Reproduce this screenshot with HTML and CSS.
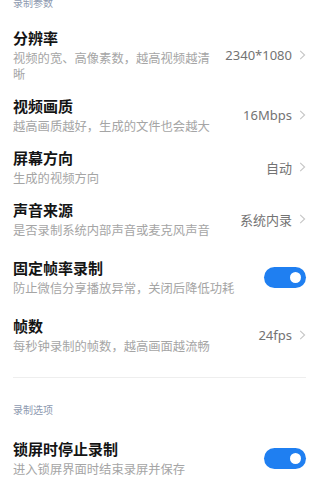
FILE: index.html
```html
<!DOCTYPE html>
<html lang="zh-CN">
<head>
<meta charset="utf-8">
<title>录制设置</title>
<link rel="stylesheet" href="styles.css">
</head>
<body>
<div class="page">
  <section class="group group-first">
    <div class="group-title">录制参数</div>
    <div class="row">
      <div class="text">
        <div class="title">分辨率</div>
        <div class="sub">视频的宽、高像素数，越高视频越清晰</div>
      </div>
      <div class="value">2340*1080</div>
      <svg class="chev" viewBox="0 0 7 10" width="7" height="10"><path d="M1.2 0.8 L5.6 5 L1.2 9.2" fill="none" stroke="#c6c6c6" stroke-width="1.1"/></svg>
    </div>
    <div class="row">
      <div class="text">
        <div class="title">视频画质</div>
        <div class="sub">越高画质越好，生成的文件也会越大</div>
      </div>
      <div class="value">16Mbps</div>
      <svg class="chev" viewBox="0 0 7 10" width="7" height="10"><path d="M1.2 0.8 L5.6 5 L1.2 9.2" fill="none" stroke="#c6c6c6" stroke-width="1.1"/></svg>
    </div>
    <div class="row">
      <div class="text">
        <div class="title">屏幕方向</div>
        <div class="sub">生成的视频方向</div>
      </div>
      <div class="value">自动</div>
      <svg class="chev" viewBox="0 0 7 10" width="7" height="10"><path d="M1.2 0.8 L5.6 5 L1.2 9.2" fill="none" stroke="#c6c6c6" stroke-width="1.1"/></svg>
    </div>
    <div class="row">
      <div class="text">
        <div class="title">声音来源</div>
        <div class="sub">是否录制系统内部声音或麦克风声音</div>
      </div>
      <div class="value">系统内录</div>
      <svg class="chev" viewBox="0 0 7 10" width="7" height="10"><path d="M1.2 0.8 L5.6 5 L1.2 9.2" fill="none" stroke="#c6c6c6" stroke-width="1.1"/></svg>
    </div>
    <div class="row row-switch">
      <div class="text">
        <div class="title">固定帧率录制</div>
        <div class="sub">防止微信分享播放异常，关闭后降低功耗</div>
      </div>
      <div class="switch on"><span class="knob"></span></div>
    </div>
    <div class="row">
      <div class="text">
        <div class="title">帧数</div>
        <div class="sub">每秒钟录制的帧数，越高画面越流畅</div>
      </div>
      <div class="value">24fps</div>
      <svg class="chev" viewBox="0 0 7 10" width="7" height="10"><path d="M1.2 0.8 L5.6 5 L1.2 9.2" fill="none" stroke="#c6c6c6" stroke-width="1.1"/></svg>
    </div>
  </section>
  <div class="divider"></div>
  <section class="group group-second">
    <div class="group-title">录制选项</div>
    <div class="row row-switch">
      <div class="text">
        <div class="title">锁屏时停止录制</div>
        <div class="sub">进入锁屏界面时结束录屏并保存</div>
      </div>
      <div class="switch on"><span class="knob"></span></div>
    </div>
  </section>
</div>
</body>
</html>
```
FILE: styles.css
```css
html, body {
  margin: 0;
  padding: 0;
  background: #ffffff;
}
body {
  font-family: "Noto Sans", "Noto Sans CJK SC", sans-serif;
  color: #111111;
  overflow: hidden;
}
.page {
  width: 323px;
  height: 490px;
  overflow: hidden;
}
.group {
  padding: 0 17px 0 13px;
}
.group-first {
  margin-top: -3px;
  padding-bottom: 16px;
}
.group-title {
  font-family: "Noto Sans CJK SC", sans-serif;
  font-size: 10px;
  line-height: 12px;
  color: #8e9ab0;
  padding-bottom: 12px;
}
.group-second {
  margin-top: 26px;
}
.group-second .group-title {
  padding-bottom: 10px;
}
.row {
  display: flex;
  align-items: center;
  padding: 7px 0;
}
.row-switch {
  padding: 13px 0;
}
.text {
  flex: 1;
  min-width: 0;
}
.title {
  font-family: "Noto Sans CJK SC", sans-serif;
  font-size: 15px;
  font-weight: 700;
  line-height: 20px;
  color: #141414;
}
.sub {
  font-family: "Noto Sans CJK SC", sans-serif;
  font-size: 12.3px;
  line-height: 16px;
  margin-top: 2px;
  color: #a5a5a5;
}
.value {
  font-size: 13px;
  color: #737373;
  margin-left: 10px;
  white-space: nowrap;
}
.chev {
  display: block;
  margin-left: 7px;
  flex: none;
}
.switch {
  width: 42px;
  height: 21px;
  border-radius: 11px;
  background: #1f7ff1;
  position: relative;
  flex: none;
  margin-left: 12px;
}
.knob {
  position: absolute;
  right: 5px;
  top: 5px;
  width: 11px;
  height: 11px;
  border-radius: 50%;
  background: #ffffff;
}
.divider {
  height: 1px;
  background: #eeeeee;
  margin: 0 17px 0 13px;
}
```
